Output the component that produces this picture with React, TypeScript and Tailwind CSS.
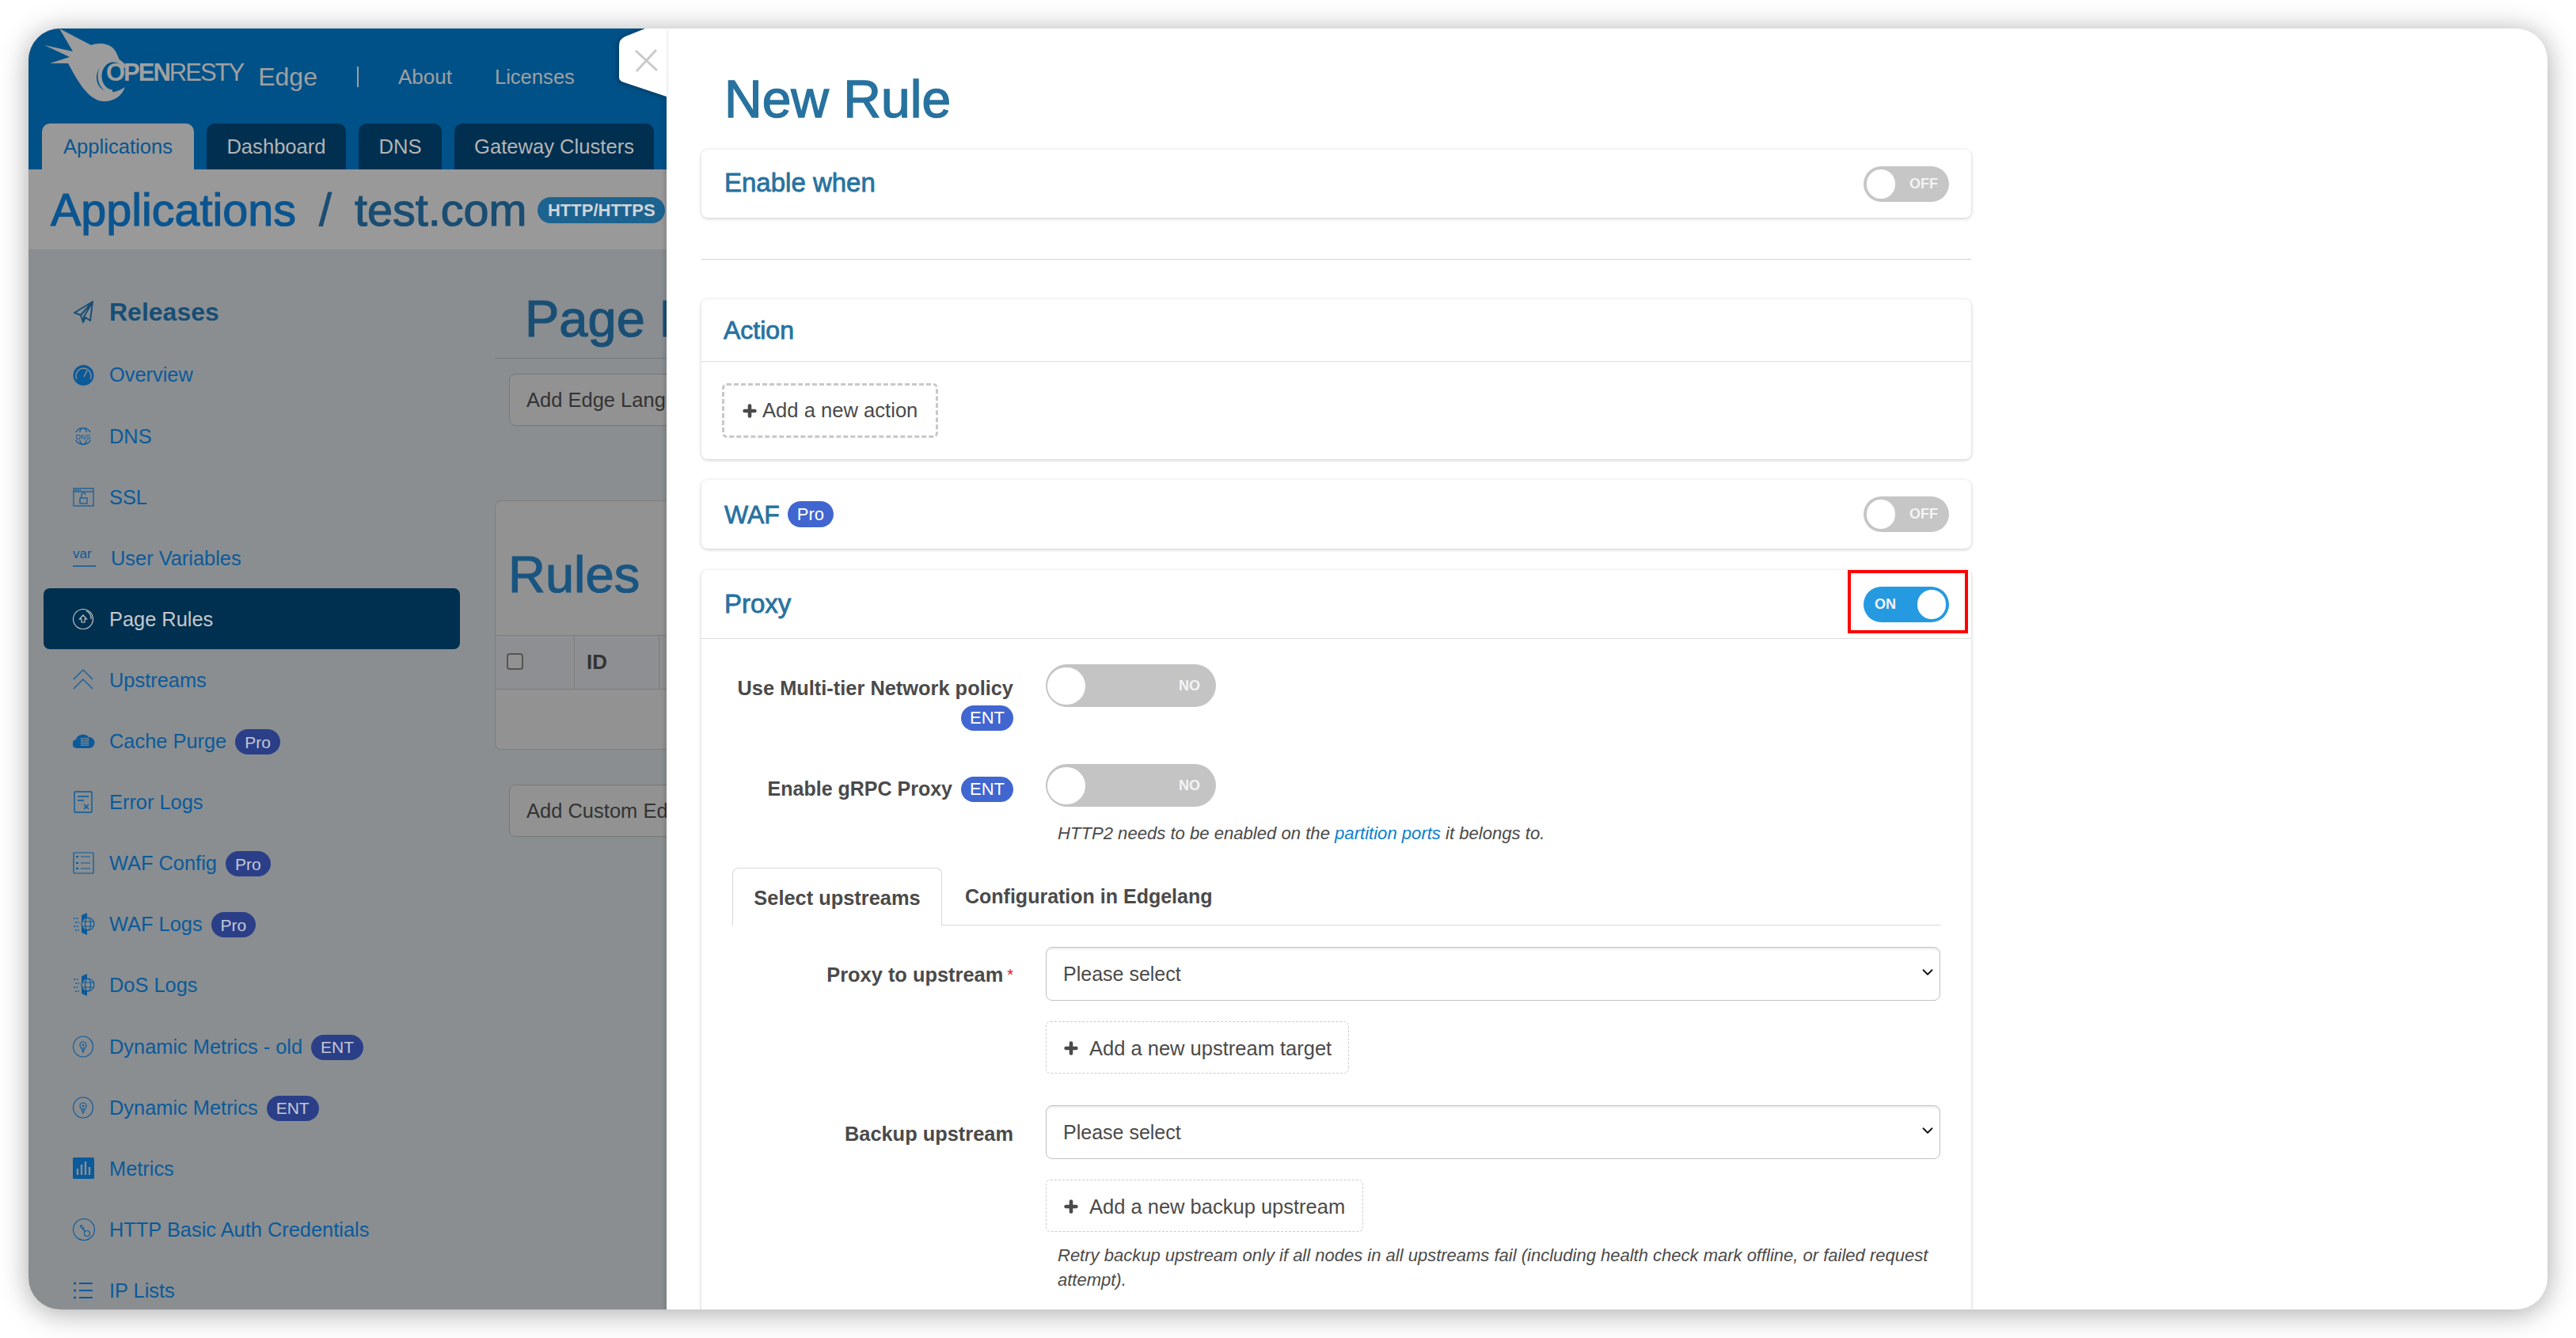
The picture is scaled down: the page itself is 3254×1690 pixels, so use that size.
import React from "react";
import { Plus, ChevronDown } from "lucide-react";

const stroke = { fill: "none", stroke: "currentColor", strokeWidth: 1.2 } as const;

function Ic({ children, w = 28, h = 28 }: { children: React.ReactNode; w?: number; h?: number }) {
  return (
    <svg width={w} height={h} viewBox={`0 0 ${w} ${h}`} className="shrink-0">
      {children}
    </svg>
  );
}

const Send = () => (
  <Ic w={28} h={28}>
    <path d="M25 1 L2 15 L10 18 L13 27 L16 21 L22 25 Z M10 18 L25 1 L14 20 L13 27" fill="none" stroke="currentColor" strokeWidth={2} strokeLinejoin="round" />
  </Ic>
);
const Gauge = () => (
  <Ic h={28}>
    <circle cx={13.5} cy={14} r={13} fill="currentColor" />
    <path d="M5 19 A 9.5 9.5 0 1 1 22 19" fill="none" stroke="#8a8e91" strokeWidth={1.4} />
    <path d="M14 16 L18 8" stroke="#8a8e91" strokeWidth={1.6} />
  </Ic>
);
const Dns = () => (
  <Ic>
    <circle cx={13} cy={14} r={10.5} {...stroke} />
    <ellipse cx={13} cy={14} rx={5} ry={10.5} {...stroke} />
    <rect x={1} y={9} width={24} height={10} fill="#8a8e91" />
    <text x={13} y={18} textAnchor="middle" fontSize={9} fill="currentColor" fontFamily="Liberation Sans">DNS</text>
  </Ic>
);
const Ssl = () => (
  <Ic>
    <rect x={1} y={3} width={25} height={22} {...stroke} />
    <path d="M1 7 H26" {...stroke} />
    <path d="M3 5 H10" stroke="currentColor" strokeWidth={1.4} strokeDasharray="2 1" />
    <rect x={9} y={15} width={9} height={7} {...stroke} />
    <path d="M11 15 V11 A2.5 2.5 0 0 1 16 11" {...stroke} />
  </Ic>
);
const VarI = () => (
  <svg width={30} height={28} viewBox="0 0 30 28" className="shrink-0">
    <text x={0} y={14} fontSize={17} fill="currentColor" fontFamily="Liberation Sans">var</text>
    <path d="M0 24 H29" stroke="currentColor" strokeWidth={1.5} />
  </svg>
);
const PageR = () => (
  <Ic>
    <circle cx={13} cy={14} r={12.5} {...stroke} />
    <path d="M17 3.5 A11 11 0 0 1 23 14" {...stroke} />
    <path d="M13 9 L17.5 14 H15 V18 H11 V14 H8.5 Z" {...stroke} />
  </Ic>
);
const Ups = () => (
  <Ic>
    <path d="M1 13 L13 1 L25 13 M1 25 L13 13 L25 25" {...stroke} />
  </Ic>
);
const Cloud = () => (
  <Ic>
    <path d="M6 23 A 5.5 5.5 0 0 1 4 12 A 9 8 0 0 1 20 9 A 7 7 0 0 1 21 23 Z" fill="currentColor" />
    <rect x={10} y={10} width={10} height={10} fill="#8a8e91" opacity={0.7} />
    <path d="M11 12 H19 M11 15 H19 M11 18 H19" stroke="currentColor" strokeWidth={1} />
  </Ic>
);
const ErrI = () => (
  <Ic>
    <rect x={2} y={1} width={22} height={26} rx={1} fill="none" stroke="currentColor" strokeWidth={1.4} />
    <path d="M6 7 H20 M6 12 H14" stroke="currentColor" strokeWidth={1.4} />
    <path d="M14 17 L20 23 M20 17 L14 23" stroke="currentColor" strokeWidth={1.4} />
  </Ic>
);
const WafC = () => (
  <Ic>
    <rect x={1} y={1} width={25} height={26} rx={1} {...stroke} />
    <path d="M10 6 H22 M10 14 H22 M10 21 H22" {...stroke} />
    <path d="M4 6 H7 M4 14 H7 M4 21 H7" stroke="currentColor" strokeWidth={2} />
  </Ic>
);
const WafL = () => (
  <Ic>
    <path d="M11 3 L18 0 V28 L11 25 Z" fill="currentColor" />
    <circle cx={19} cy={14} r={8} fill="#8a8e91" stroke="currentColor" strokeWidth={1.2} />
    <ellipse cx={19} cy={14} rx={3.5} ry={8} {...stroke} />
    <path d="M11 11 H27 M11 17 H27" {...stroke} />
    <path d="M1 7 H8 M3 12 H8 M1 17 H8 M3 22 H8" stroke="currentColor" strokeWidth={1.3} strokeDasharray="2 1.5" />
  </Ic>
);
const Dyn = () => (
  <Ic>
    <ellipse cx={13} cy={14} rx={12.5} ry={13} {...stroke} />
    <circle cx={13} cy={12} r={4} {...stroke} />
    <path d="M11 16 L13 21 L15 16" {...stroke} />
    <circle cx={13} cy={12} r={1.3} fill="currentColor" />
  </Ic>
);
const Bars = () => (
  <Ic>
    <rect x={0} y={0} width={27} height={27} rx={1.5} fill="currentColor" />
    <path d="M6 22 V14 M11 22 V9 M16 22 V5 M21 22 V12" stroke="#8a8e91" strokeWidth={2.4} />
  </Ic>
);
const Key = () => (
  <Ic>
    <circle cx={14} cy={14} r={13.5} {...stroke} />
    <circle cx={18} cy={19} r={3.5} {...stroke} />
    <path d="M15.5 16.5 L9 9 M9 9 H13 M11.5 12 H15" {...stroke} />
  </Ic>
);
const ListI = () => (
  <Ic>
    <path d="M8 5 H25 M8 14 H25 M8 23 H25" stroke="currentColor" strokeWidth={2.2} />
    <path d="M1 5 H4 M1 14 H4 M1 23 H4" stroke="currentColor" strokeWidth={2.6} />
  </Ic>
);

const items: { label: string; icon: React.ReactNode; badge?: string; active?: boolean }[] = [
  { label: "Overview", icon: <Gauge /> },
  { label: "DNS", icon: <Dns /> },
  { label: "SSL", icon: <Ssl /> },
  { label: "User Variables", icon: <VarI /> },
  { label: "Page Rules", icon: <PageR />, active: true },
  { label: "Upstreams", icon: <Ups /> },
  { label: "Cache Purge", icon: <Cloud />, badge: "Pro" },
  { label: "Error Logs", icon: <ErrI /> },
  { label: "WAF Config", icon: <WafC />, badge: "Pro" },
  { label: "WAF Logs", icon: <WafL />, badge: "Pro" },
  { label: "DoS Logs", icon: <WafL /> },
  { label: "Dynamic Metrics - old", icon: <Dyn />, badge: "ENT" },
  { label: "Dynamic Metrics", icon: <Dyn />, badge: "ENT" },
  { label: "Metrics", icon: <Bars /> },
  { label: "HTTP Basic Auth Credentials", icon: <Key /> },
  { label: "IP Lists", icon: <ListI /> },
];

function Toggle({ on, label }: { on?: boolean; label: string }) {
  return (
    <div className={`flex items-center h-[45px] w-[108px] rounded-full px-[4px] shrink-0 ${on ? "bg-[#269ae1] justify-between" : "bg-[#c6c6c6] justify-between"}`}>
      {on ? (
        <>
          <span className="ml-[10px] text-[18px] font-bold text-[#f4f4f4]">{label}</span>
          <span className="h-[37px] w-[36px] rounded-full bg-white" />
        </>
      ) : (
        <>
          <span className="h-[37px] w-[36px] rounded-full bg-white" />
          <span className="mr-[10px] text-[18px] font-bold text-[#f4f4f4]">{label}</span>
        </>
      )}
    </div>
  );
}

function BigToggle() {
  return (
    <div className="flex items-center justify-between h-[54px] w-[215px] rounded-full bg-[#c4c4c4] pl-[2px] pr-[20px] shrink-0">
      <span className="h-[47px] w-[48px] rounded-full bg-white" />
      <span className="text-[18px] font-bold text-[#f4f4f4]">NO</span>
    </div>
  );
}

function Badge({ children }: { children: React.ReactNode }) {
  return (
    <span className="inline-flex items-center justify-center h-[32px] w-[66px] rounded-full bg-[#4166d0] text-white text-[22px] leading-none">
      {children}
    </span>
  );
}

function Select() {
  return (
    <div className="relative h-[68px] w-full">
      <select className="appearance-none h-full w-full rounded-[8px] border border-[#c2c2c2] bg-white pl-[21px] pt-[1px] text-[25px] text-[#4a4a4a] shadow-[inset_0_2px_2px_rgba(0,0,0,0.08)]">
        <option>Please select</option>
      </select>
      <ChevronDown size={22} strokeWidth={2} className="absolute right-[5px] top-[21px] text-[#111]" />
    </div>
  );
}

function AddBtn({ w, children }: { w: string; children: React.ReactNode }) {
  return (
    <div className={`mt-[26px] flex items-center h-[66px] ${w} rounded-[6px] border border-dashed border-[#ccc] pl-[20px] pt-[2px] text-[25.5px] text-[#4a4a4a]`}>
      <Plus size={22} strokeWidth={5} className="mr-[12px] text-[#4a4a4a]" />
      {children}
    </div>
  );
}

const cardCls = "rounded-[8px] bg-white shadow-[0_1px_4px_rgba(0,0,0,0.22)]";
const titleCls = "text-[33px] text-[#27729f] [-webkit-text-stroke:0.8px_#27729f]";
const row = "grid grid-cols-[394px_1130px] gap-x-[41px]";

export default function App() {
  return (
    <div className="h-[1690px] w-[3254px] bg-white p-[36px] [font-family:'Liberation_Sans',Arial,sans-serif]">
      <div className="relative flex h-[1618px] w-[3182px] overflow-hidden rounded-[40px] bg-white shadow-[0_4px_36px_rgba(0,0,0,0.35)]">
        {/* dimmed page */}
        <div className="w-[806px] shrink-0 overflow-hidden whitespace-nowrap bg-[#8a8e91]">
          <header className="bg-[#005188]">
            <div className="flex items-center h-[120px] pt-[2px] text-[#a0a0a0]">
              <svg width={120} height={95} viewBox="0 0 120 95" className="ml-[14px] mt-[-2px] shrink-0 self-start">
                <path d="M25 0 L65 21 C72 18 85 18 92 24 C97 28 99 36 102 42 L98 40 C85 38 72 48 72 62 C72 74 82 82 94 80 C100 79 104 76 108 74 C104 86 92 93 80 92 C62 90 50 70 36 44 L13 44 L38 36 L6 21 L42 29 Z" fill="#9c9c9c" />
                <ellipse cx={93} cy={60} rx={17} ry={20} fill="none" stroke="#9c9c9c" strokeWidth={5} strokeDasharray="75 40" strokeDashoffset={-30} />
              </svg>
              <span className="ml-[-36px] text-[31px] mt-[-12px] leading-none tracking-[-2px]">
                <span className="font-bold">OPEN</span>RESTY
              </span>
              <span className="ml-[19px] text-[32px]">Edge</span>
              <span className="ml-[50px] h-[26px] w-[2px] bg-[#a0a0a0]" />
              <span className="ml-[50px] text-[26px]">About</span>
              <span className="ml-[54px] text-[25.6px]">Licenses</span>
            </div>
            <div className="flex h-[58px] gap-[16px] pl-[17px] text-[25.6px]">
              <div className="flex w-[192px] items-center justify-center rounded-t-[10px] bg-[#999] text-[#0a5590]">Applications</div>
              <div className="flex w-[176px] items-center justify-center rounded-t-[10px] bg-[#002f50] text-[#b4b4b4]">Dashboard</div>
              <div className="flex w-[105px] items-center justify-center rounded-t-[10px] bg-[#002f50] text-[#b4b4b4]">DNS</div>
              <div className="flex w-[252px] items-center justify-center rounded-t-[10px] bg-[#002f50] text-[#b4b4b4]">Gateway Clusters</div>
            </div>
          </header>
          <div className="flex h-[101px] items-center bg-[#999] pl-[28px] pt-[1px]">
            <span className="text-[57.5px] text-[#0a5590] [-webkit-text-stroke:1.2px_#0a5590]">Applications</span>
            <span className="mx-[29px] text-[57.5px] text-[#1a4d72] [-webkit-text-stroke:1px_#1a4d72]">/</span>
            <span className="text-[57.5px] text-[#1a4d72] [-webkit-text-stroke:1.2px_#1a4d72]">test.com</span>
            <span className="ml-[14px] flex h-[33px] w-[161px] items-center justify-center rounded-full bg-[#1c6390] text-[22px] font-bold text-[#cfd4d8]">HTTP/HTTPS</span>
          </div>
          <div className="flex h-[1339px]">
            <aside className="w-[589px] shrink-0 pl-[19px] pr-[44px]">
              <div className="mt-[59px] mb-[21px] flex h-[40px] items-center pl-[37px] text-[#174e75]">
                <Send />
                <span className="ml-[18px] text-[32px] font-bold">Releases</span>
              </div>
              {items.map((it) => (
                <div
                  key={it.label}
                  className={`flex h-[77.1px] items-center rounded-[8px] pl-[37px] text-[25.4px] ${it.active ? "bg-[#00304f] text-[#c4c8cc]" : "text-[#0b5a9a]"}`}
                >
                  {it.icon}
                  <span className="ml-[18px]">{it.label}</span>
                  {it.badge && (
                    <span className="ml-[11px] mt-[2px] flex h-[32px] items-center justify-center rounded-full bg-[#2b3f88] px-[12px] text-[21px] leading-none text-[#c4c8d4]">
                      {it.badge}
                    </span>
                  )}
                </div>
              ))}
            </aside>
            <main className="w-[1200px] shrink-0 text-[#333]">
              <div className="flex h-[138px] items-end border-b border-[#777] pl-[38px] pb-[12px]">
                <span className="text-[65px] leading-[75px] text-[#1a4f75] [-webkit-text-stroke:1.2px_#1a4f75]">Page Rules</span>
              </div>
              <div className="mt-[19px] ml-[18px] flex h-[66px] w-[600px] items-center rounded-[8px] border border-[#777] bg-[#929292] pl-[21px] text-[25.5px]">Add Edge Language Rules</div>
              <div className="mt-[94px] h-[315px] w-[1000px] rounded-[8px] border border-[#7d7d7d] bg-[#929292]">
                <div className="flex h-[169px] items-center pl-[16px] pt-[16px]">
                  <span className="text-[65px] text-[#1a5580] [-webkit-text-stroke:1.2px_#1a5580]">Rules</span>
                </div>
                <div className="flex h-[69px] border-y border-[#7d7d7d] bg-[#8d8f92]">
                  <div className="w-[100px] border-r border-[#7d7d7d] pl-[14px] pt-[22px]">
                    <div className="h-[21px] w-[21px] rounded-[4px] border-2 border-[#555] bg-[#929292]" />
                  </div>
                  <div className="flex w-[107px] items-center border-r border-[#7d7d7d] pl-[15px] text-[26px] font-bold">ID</div>
                </div>
              </div>
              <div className="mt-[44px] ml-[18px] flex h-[66px] w-[600px] items-center rounded-[8px] border border-[#777] bg-[#929292] pl-[21px] text-[25.5px]">Add Custom Edge Language Rules</div>
            </main>
          </div>
        </div>

        {/* drawer */}
        <div className="flex-1 overflow-hidden pl-[44px] shadow-[-2px_0_6px_rgba(0,0,0,0.15)] text-[#4a4a4a]">
          <div className="w-[1604px]">
            <div className="flex h-[153px] items-center pl-[29px] pt-[25px]">
              <h1 className="text-[66px] leading-none text-[#27729f] [-webkit-text-stroke:1.4px_#27729f]">New Rule</h1>
            </div>

            <section className={`${cardCls} flex h-[86px] items-center justify-between pl-[29px] pr-[28px]`}>
              <span className={`${titleCls} mt-[-3px]`}>Enable when</span>
              <Toggle label="OFF" />
            </section>

            <hr className="mt-[52px] border-t border-[#c9d3da]" />

            <section className={`${cardCls} mt-[50px] h-[202px]`}>
              <div className="flex h-[79px] items-center border-b border-[#ddd] pl-[28px]">
                <span className="text-[32px] text-[#27729f] [-webkit-text-stroke:0.8px_#27729f]">Action</span>
              </div>
              <div className="ml-[26px] mt-[27px] flex h-[69px] w-[273px] items-center rounded-[6px] border-[3px] border-dashed border-[#c8c8c8] pl-[21px] text-[25.6px]">
                <Plus size={22} strokeWidth={5} className="mr-[5px]" />
                Add a new action
              </div>
            </section>

            <section className={`${cardCls} mt-[26px] flex h-[87px] items-center justify-between pl-[29px] pr-[28px]`}>
              <span className="flex items-center">
                <span className="text-[32px] text-[#27729f] [-webkit-text-stroke:0.8px_#27729f]">WAF</span>
                <span className="ml-[10px] flex h-[33px] w-[58px] items-center justify-center rounded-full bg-[#4166d0] text-[22px] leading-none text-white">Pro</span>
              </span>
              <Toggle label="OFF" />
            </section>

            <section className={`${cardCls} relative mt-[27px] h-[1100px]`}>
              <div className="flex h-[87px] items-center justify-between border-b border-[#ddd] pl-[29px] pr-[28px]">
                <span className={titleCls}>Proxy</span>
                <Toggle on label="ON" />
              </div>
              <div className="absolute left-[1448px] top-0 h-[80px] w-[152px] border-[4px] border-[#ff0000]" />

              <div className={`mt-[32px] ${row}`}>
                <div className="flex flex-col items-end pt-[15px]">
                  <span className="text-[25.4px] font-bold leading-[30px]">Use Multi-tier Network policy</span>
                  <span className="mt-[7px]"><Badge>ENT</Badge></span>
                </div>
                <div><BigToggle /></div>
              </div>

              <div className={`mt-[42px] ${row}`}>
                <div className="flex items-start justify-end pt-[16px]">
                  <span className="text-[25px] font-bold leading-[30px]">Enable gRPC Proxy</span>
                  <span className="ml-[11px]"><Badge>ENT</Badge></span>
                </div>
                <div><BigToggle /></div>
              </div>

              <p className="ml-[450px] mt-[18px] text-[22.1px] italic leading-[31px]">
                HTTP2 needs to be enabled on the <span className="text-[#0a7fd0]">partition ports</span> it belongs to.
              </p>

              <div className="ml-[39px] mr-[38px] mt-[28px] flex h-[73px] border-b border-[#d8d8d8] font-bold">
                <div className="flex h-[73px] w-[265px] items-center justify-center rounded-t-[8px] border border-b-0 border-[#d8d8d8] bg-white pt-[2px] text-[25.4px]">Select upstreams</div>
                <div className="ml-[29px] flex h-[72px] items-center pt-[1px] text-[25px]">Configuration in Edgelang</div>
              </div>

              <div className={`mt-[27px] ${row}`}>
                <div className="flex justify-end pt-[20px] text-[25.4px] font-bold leading-[30px]">
                  Proxy to upstream<span className="ml-[5px] text-[20px] font-normal text-[#f01010]">*</span>
                </div>
                <div>
                  <Select />
                  <AddBtn w="w-[383px]">Add a new upstream target</AddBtn>
                </div>
              </div>

              <div className={`mt-[40px] ${row}`}>
                <div className="flex justify-end pt-[21px] text-[25.4px] font-bold leading-[30px]">Backup upstream</div>
                <div>
                  <Select />
                  <AddBtn w="w-[401px]">Add a new backup upstream</AddBtn>
                  <p className="mt-[14px] pl-[15px] text-[22px] italic leading-[31px]">
                    Retry backup upstream only if all nodes in all upstreams fail (including health check mark offline, or failed request attempt).
                  </p>
                </div>
              </div>
            </section>
          </div>
        </div>

        {/* close handle */}
        <svg width={60} height={86} viewBox="0 0 60 86" className="absolute left-[746px] top-0 drop-shadow-[-2px_1px_3px_rgba(0,0,0,0.3)]">
          <path d="M60 0 H33 L8 10 Q0 13 0 22 V62 Q0 66 6 68 L60 86 Z" fill="#fff" />
          <path d="M21 28 L48 53 M47 27 L22 54" stroke="#c9c9c9" strokeWidth={3} fill="none" />
        </svg>
      </div>
    </div>
  );
}
